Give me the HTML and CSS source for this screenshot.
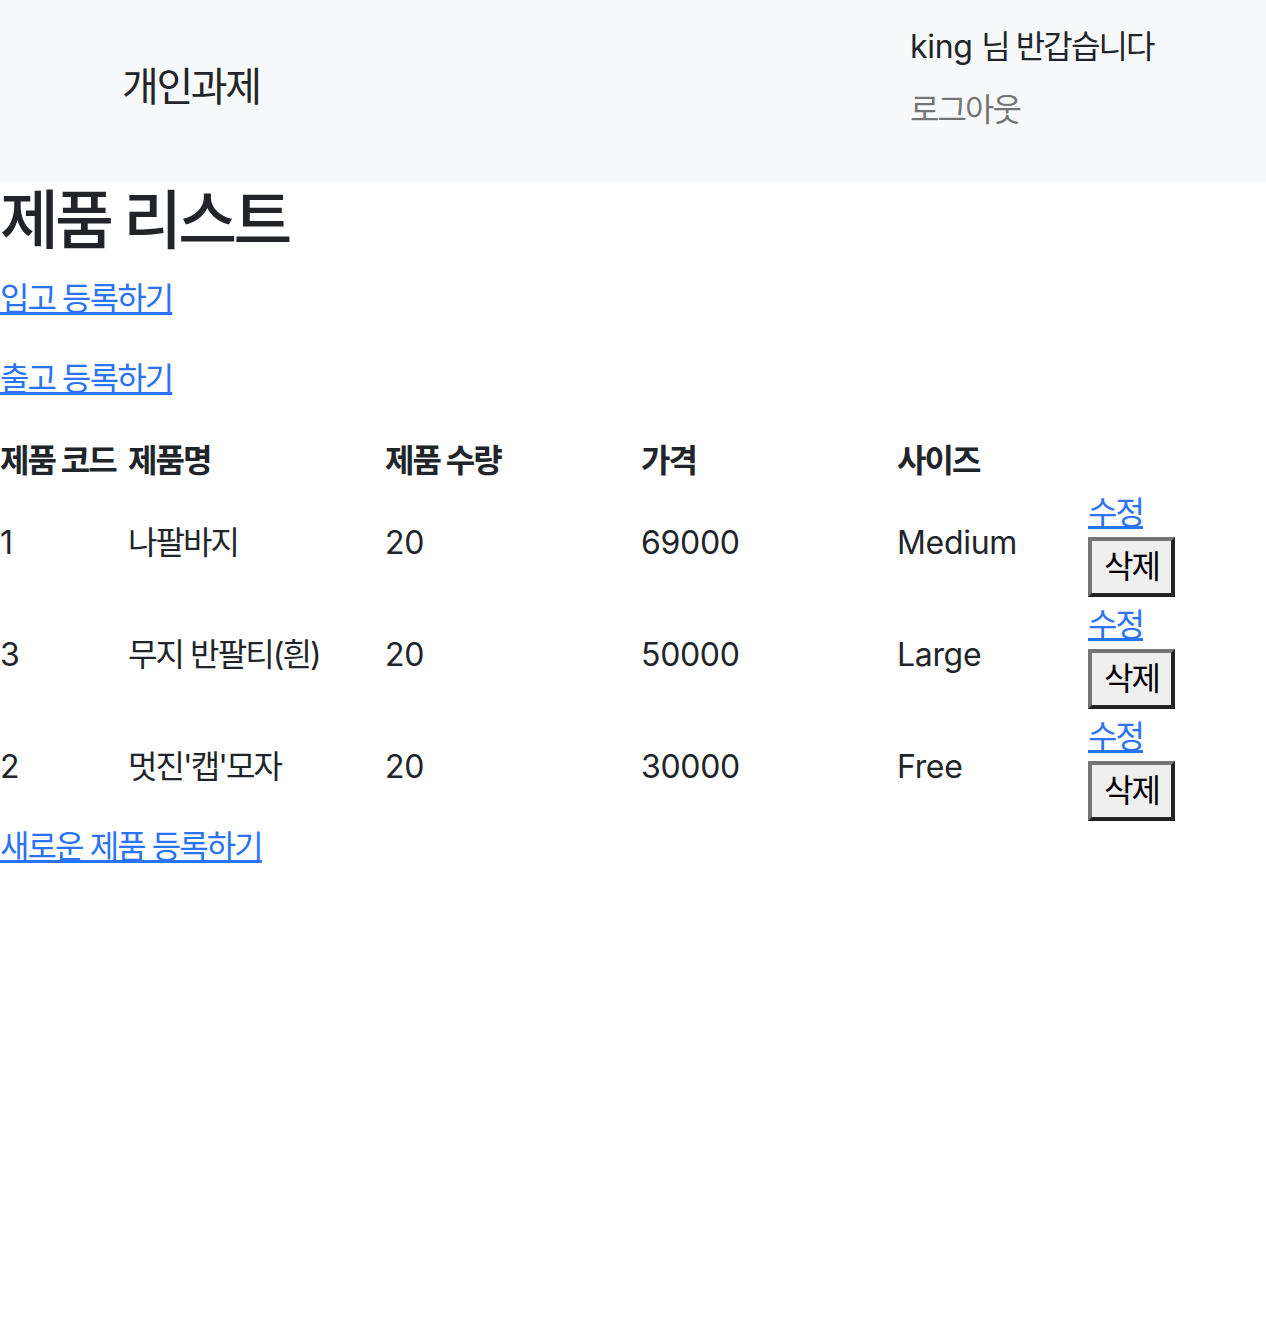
FILE: index.html
```html
<!DOCTYPE html>
<html lang="ko">
<head>
<meta charset="utf-8">
<title>제품 리스트</title>
<link rel="stylesheet" href="styles.css">
</head>
<body>
<nav class="navbar">
  <div class="brand ko">개인과제</div>
  <ul class="nav-right">
    <li class="greet">king <span class="ko">님 반갑습니다</span></li>
    <li><a class="logout ko" href="#">로그아웃</a></li>
  </ul>
</nav>
<main>
  <h2 class="title ko">제품 리스트</h2>
  <p class="para"><a class="link ko" href="#">입고 등록하기</a></p>
  <p class="para"><a class="link ko" href="#">출고 등록하기</a></p>
  <table class="products">
    <colgroup>
      <col class="c-code">
      <col class="c-name">
      <col class="c-qty">
      <col class="c-price">
      <col class="c-size">
      <col class="c-act">
    </colgroup>
    <thead>
      <tr>
        <th class="ko">제품 코드</th>
        <th class="ko">제품명</th>
        <th class="ko">제품 수량</th>
        <th class="ko">가격</th>
        <th class="ko">사이즈</th>
        <th></th>
      </tr>
    </thead>
    <tbody>
      <tr>
        <td>1</td>
        <td class="ko">나팔바지</td>
        <td>20</td>
        <td>69000</td>
        <td>Medium</td>
        <td><a class="link ko" href="#">수정</a><form class="del"><button type="button" class="btn ko">삭제</button></form></td>
      </tr>
      <tr>
        <td>3</td>
        <td class="ko">무지 반팔티(흰)</td>
        <td>20</td>
        <td>50000</td>
        <td>Large</td>
        <td><a class="link ko" href="#">수정</a><form class="del"><button type="button" class="btn ko">삭제</button></form></td>
      </tr>
      <tr>
        <td>2</td>
        <td class="ko">멋진'캡'모자</td>
        <td>20</td>
        <td>30000</td>
        <td>Free</td>
        <td><a class="link ko" href="#">수정</a><form class="del"><button type="button" class="btn ko">삭제</button></form></td>
      </tr>
    </tbody>
  </table>
  <a class="link ko" href="#">새로운 제품 등록하기</a>
</main>
</body>
</html>
```
FILE: styles.css
```css
* { box-sizing: border-box; }

body {
  margin: 0;
  font-family: "Inter", "Noto Sans CJK KR", sans-serif;
  font-size: 32px;
  line-height: 48px;
  color: #212529;
  background: #fff;
  letter-spacing: -0.01em;
}

.ko {
  letter-spacing: -0.06em;
  word-spacing: 0;
}

.navbar {
  height: 182px;
  background: #f8f9fa;
  display: flex;
  align-items: flex-start;
}

.brand {
  margin-left: 122px;
  margin-top: 57px;
  font-size: 40px;
  line-height: 60px;
  width: 788px;
}

.nav-right {
  list-style: none;
  margin: 0;
  padding: 23px 0 0 0;
  display: flex;
  flex-direction: column;
  gap: 15px;
}

.greet { color: #212529; }

.logout {
  color: rgba(0, 0, 0, 0.55);
  text-decoration: none;
}

.title {
  margin: 0 0 16px 0;
  font-size: 64px;
  line-height: 1.2;
  font-weight: 500;
}

.para { margin: 0 0 32px 0; }

.link {
  color: #2a72f6;
  text-decoration: underline;
}

.products {
  width: 100%;
  border-collapse: collapse;
  table-layout: fixed;
}

.c-code { width: 126px; }
.c-name { width: 257px; }
.c-qty { width: 256px; }
.c-price { width: 256px; }
.c-size { width: 191px; }

.products th,
.products td {
  padding: 2px;
  text-align: left;
  vertical-align: middle;
  white-space: nowrap;
}

.products th:first-child,
.products td:first-child { padding-left: 0; }

.products th { font-weight: 700; }

.del { margin: 0; }

.btn {
  font-family: inherit;
  font-size: 32px;
  line-height: 48px;
  padding: 2px 12px;
  border-width: 4px;
  border-style: solid;
  border-color: #767676 #222 #222 #767676;
  background: #efefef;
  color: #000;
  display: block;
}
```
